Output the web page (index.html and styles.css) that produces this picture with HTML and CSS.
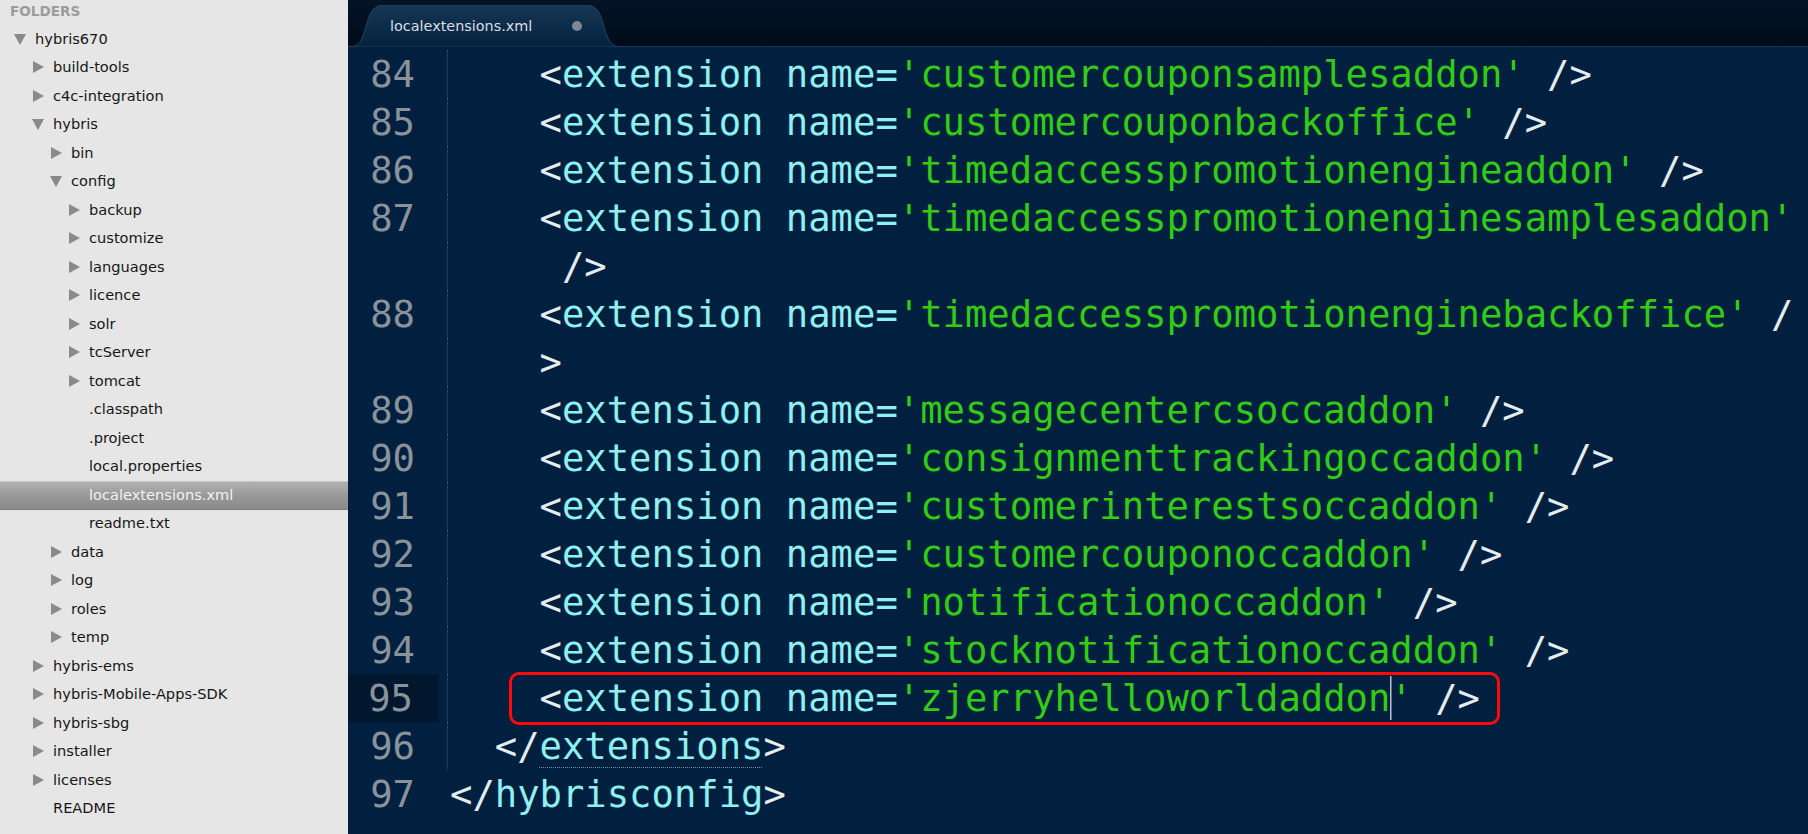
FILE: index.html
```html
<!DOCTYPE html>
<html>
<head>
<meta charset="utf-8">
<link rel="stylesheet" href="styles.css">
</head>
<body>
<div class="app">
  <aside class="sidebar">
    <div class="sb-title">FOLDERS</div>
    <ul class="tree">
      <li class="row l0"><span class="arr open"></span><span class="name">hybris670</span></li>
      <li class="row l1"><span class="arr"></span><span class="name">build-tools</span></li>
      <li class="row l1"><span class="arr"></span><span class="name">c4c-integration</span></li>
      <li class="row l1"><span class="arr open"></span><span class="name">hybris</span></li>
      <li class="row l2"><span class="arr"></span><span class="name">bin</span></li>
      <li class="row l2"><span class="arr open"></span><span class="name">config</span></li>
      <li class="row l3"><span class="arr"></span><span class="name">backup</span></li>
      <li class="row l3"><span class="arr"></span><span class="name">customize</span></li>
      <li class="row l3"><span class="arr"></span><span class="name">languages</span></li>
      <li class="row l3"><span class="arr"></span><span class="name">licence</span></li>
      <li class="row l3"><span class="arr"></span><span class="name">solr</span></li>
      <li class="row l3"><span class="arr"></span><span class="name">tcServer</span></li>
      <li class="row l3"><span class="arr"></span><span class="name">tomcat</span></li>
      <li class="row l3"><span class="arr none"></span><span class="name">.classpath</span></li>
      <li class="row l3"><span class="arr none"></span><span class="name">.project</span></li>
      <li class="row l3"><span class="arr none"></span><span class="name">local.properties</span></li>
      <li class="row l3 selected"><span class="arr none"></span><span class="name">localextensions.xml</span></li>
      <li class="row l3"><span class="arr none"></span><span class="name">readme.txt</span></li>
      <li class="row l2"><span class="arr"></span><span class="name">data</span></li>
      <li class="row l2"><span class="arr"></span><span class="name">log</span></li>
      <li class="row l2"><span class="arr"></span><span class="name">roles</span></li>
      <li class="row l2"><span class="arr"></span><span class="name">temp</span></li>
      <li class="row l1"><span class="arr"></span><span class="name">hybris-ems</span></li>
      <li class="row l1"><span class="arr"></span><span class="name">hybris-Mobile-Apps-SDK</span></li>
      <li class="row l1"><span class="arr"></span><span class="name">hybris-sbg</span></li>
      <li class="row l1"><span class="arr"></span><span class="name">installer</span></li>
      <li class="row l1"><span class="arr"></span><span class="name">licenses</span></li>
      <li class="row l1"><span class="arr none"></span><span class="name">README</span></li>
    </ul>
  </aside>
  <main class="editor">
    <div class="tabbar">
      <div class="tab">
        <svg class="tab-shape" width="272" height="42" viewBox="0 0 272 42">
          <defs>
            <linearGradient id="tg" x1="0" y1="0" x2="0" y2="1">
              <stop offset="0" stop-color="#163654"/>
              <stop offset="1" stop-color="#03223f"/>
            </linearGradient>
          </defs>
          <path d="M0,42 C10,42 13,35 16,25 C20,11 22,1 34,0 L238,0 C250,1 252,11 256,25 C259,35 262,42 272,42 Z" fill="url(#tg)" stroke="#24445f" stroke-width="1"/>
        </svg>
        <span class="tab-label">localextensions.xml</span>
        <span class="tab-dot"></span>
      </div>
    </div>
    <div class="code">
      <div class="line"><div class="gut">84</div><div class="txt guide">    <span class="p">&lt;</span><span class="t">extension name=</span><span class="s">'customercouponsamplesaddon'</span> <span class="p">/&gt;</span></div></div>
      <div class="line"><div class="gut">85</div><div class="txt guide">    <span class="p">&lt;</span><span class="t">extension name=</span><span class="s">'customercouponbackoffice'</span> <span class="p">/&gt;</span></div></div>
      <div class="line"><div class="gut">86</div><div class="txt guide">    <span class="p">&lt;</span><span class="t">extension name=</span><span class="s">'timedaccesspromotionengineaddon'</span> <span class="p">/&gt;</span></div></div>
      <div class="line"><div class="gut">87</div><div class="txt guide">    <span class="p">&lt;</span><span class="t">extension name=</span><span class="s">'timedaccesspromotionenginesamplesaddon'</span></div></div>
      <div class="line"><div class="gut"></div><div class="txt guide">     <span class="p">/&gt;</span></div></div>
      <div class="line"><div class="gut">88</div><div class="txt guide">    <span class="p">&lt;</span><span class="t">extension name=</span><span class="s">'timedaccesspromotionenginebackoffice'</span> <span class="p">/</span></div></div>
      <div class="line"><div class="gut"></div><div class="txt guide">    <span class="p">&gt;</span></div></div>
      <div class="line"><div class="gut">89</div><div class="txt guide">    <span class="p">&lt;</span><span class="t">extension name=</span><span class="s">'messagecentercsoccaddon'</span> <span class="p">/&gt;</span></div></div>
      <div class="line"><div class="gut">90</div><div class="txt guide">    <span class="p">&lt;</span><span class="t">extension name=</span><span class="s">'consignmenttrackingoccaddon'</span> <span class="p">/&gt;</span></div></div>
      <div class="line"><div class="gut">91</div><div class="txt guide">    <span class="p">&lt;</span><span class="t">extension name=</span><span class="s">'customerinterestsoccaddon'</span> <span class="p">/&gt;</span></div></div>
      <div class="line"><div class="gut">92</div><div class="txt guide">    <span class="p">&lt;</span><span class="t">extension name=</span><span class="s">'customercouponoccaddon'</span> <span class="p">/&gt;</span></div></div>
      <div class="line"><div class="gut">93</div><div class="txt guide">    <span class="p">&lt;</span><span class="t">extension name=</span><span class="s">'notificationoccaddon'</span> <span class="p">/&gt;</span></div></div>
      <div class="line"><div class="gut">94</div><div class="txt guide">    <span class="p">&lt;</span><span class="t">extension name=</span><span class="s">'stocknotificationoccaddon'</span> <span class="p">/&gt;</span></div></div>
      <div class="line current"><div class="gut">95</div><div class="txt guide">    <span class="p">&lt;</span><span class="t">extension name=</span><span class="s">'zjerryhelloworldaddon</span><span class="s caret">'</span> <span class="p">/&gt;</span><span class="mark"></span></div></div>
      <div class="line"><div class="gut">96</div><div class="txt guide">  <span class="p">&lt;/</span><span class="t match">extensions</span><span class="p">&gt;</span></div></div>
      <div class="line"><div class="gut">97</div><div class="txt"><span class="p">&lt;/</span><span class="t">hybrisconfig</span><span class="p">&gt;</span></div></div>
    </div>
  </main>
</div>
</body>
</html>
```

FILE: styles.css
```css
* { box-sizing: border-box; }

html, body {
  margin: 0;
  padding: 0;
  width: 1808px;
  height: 834px;
  overflow: hidden;
}

.app {
  display: flex;
  width: 1808px;
  height: 834px;
}

/* ---------- sidebar ---------- */
.sidebar {
  width: 348px;
  flex: 0 0 348px;
  background: #e6e6e6;
  font-family: "DejaVu Sans", "Noto Sans", sans-serif;
  color: #161616;
}

.sb-title {
  height: 25px;
  padding: 3px 0 0 10px;
  font-size: 13.6px;
  font-weight: bold;
  color: #9b9b9b;
  line-height: 16px;
}

.tree {
  list-style: none;
  margin: 0;
  padding: 0;
}

.row {
  height: 28.5px;
  display: flex;
  align-items: center;
  font-size: 14.6px;
  white-space: nowrap;
}

.row.l0 { padding-left: 14px; }
.row.l1 { padding-left: 32px; }
.row.l2 { padding-left: 50px; }
.row.l3 { padding-left: 68px; }

.arr {
  width: 12px;
  height: 13px;
  margin-right: 9px;
  flex: 0 0 12px;
  position: relative;
}

.arr::before {
  content: "";
  position: absolute;
  left: 1px;
  top: 0;
  width: 0;
  height: 0;
  border-left: 11px solid #8a8a8a;
  border-top: 6.5px solid transparent;
  border-bottom: 6.5px solid transparent;
}

.arr.open::before {
  left: 0;
  top: 1px;
  border-left: 6px solid transparent;
  border-right: 6px solid transparent;
  border-top: 11px solid #8a8a8a;
  border-bottom: 0;
}

.arr.none::before { display: none; }

.row .name {
  position: relative;
  top: -1px;
}

.row.selected {
  background: linear-gradient(#b1b1b1, #959595 60%, #8b8b8b);
  border-top: 1px solid #c6c6c6;
  border-bottom: 1px solid #7b7b7b;
  color: #f2f2f2;
}

/* ---------- editor ---------- */
.editor {
  flex: 1 1 auto;
  background: #01203f;
  display: flex;
  flex-direction: column;
  min-width: 0;
}

.tabbar {
  height: 47px;
  background: linear-gradient(#031427, #010c19);
  padding-top: 5px;
  border-bottom: 1px solid #1a3553;
  display: flex;
}

.tab {
  position: relative;
  width: 272px;
  height: 42px;
  margin-left: 1px;
  display: flex;
  align-items: center;
  font-family: "DejaVu Sans", "Noto Sans", sans-serif;
}

.tab-shape {
  position: absolute;
  left: 0;
  top: 0;
}

.tab-label {
  position: relative;
  margin-left: 41px;
  margin-top: -1px;
  font-size: 14.4px;
  color: #d9dee4;
}

.tab-dot {
  position: absolute;
  left: 223px;
  top: 16px;
  width: 10px;
  height: 10px;
  border-radius: 50%;
  background: #7d8894;
}

.code {
  padding-top: 3px;
  font-family: "DejaVu Sans Mono", "Liberation Mono", monospace;
  font-size: 37.2px;
}

.line {
  display: flex;
  height: 48px;
  line-height: 48px;
}

.gut {
  width: 92px;
  flex: 0 0 92px;
  padding-right: 25px;
  text-align: right;
  color: #8a939b;
}

.line.current .gut {
  background: #00172e;
  width: 90px;
  flex-basis: 90px;
  margin-right: 2px;
}

.txt {
  position: relative;
  margin-left: 7px;
  padding-left: 2px;
  border-left: 1px dotted transparent;
  white-space: pre;
  color: #8ef0f0;
}

.txt.guide {
  border-left-color: #3d5570;
}

.p { color: #e3ecf1; }
.t { color: #8ef0f0; }
.s { color: #33cc14; }

.caret {
  box-shadow: inset 1.5px 0 0 #b9c3cc;
}

.match {
  text-decoration: underline dotted #7d8c9a;
  text-decoration-thickness: 1px;
  text-underline-offset: 8px;
}

.mark {
  position: absolute;
  left: 61px;
  top: -2px;
  width: 991px;
  height: 53px;
  border: 3px solid #ff0a0a;
  border-radius: 10px;
}
```
